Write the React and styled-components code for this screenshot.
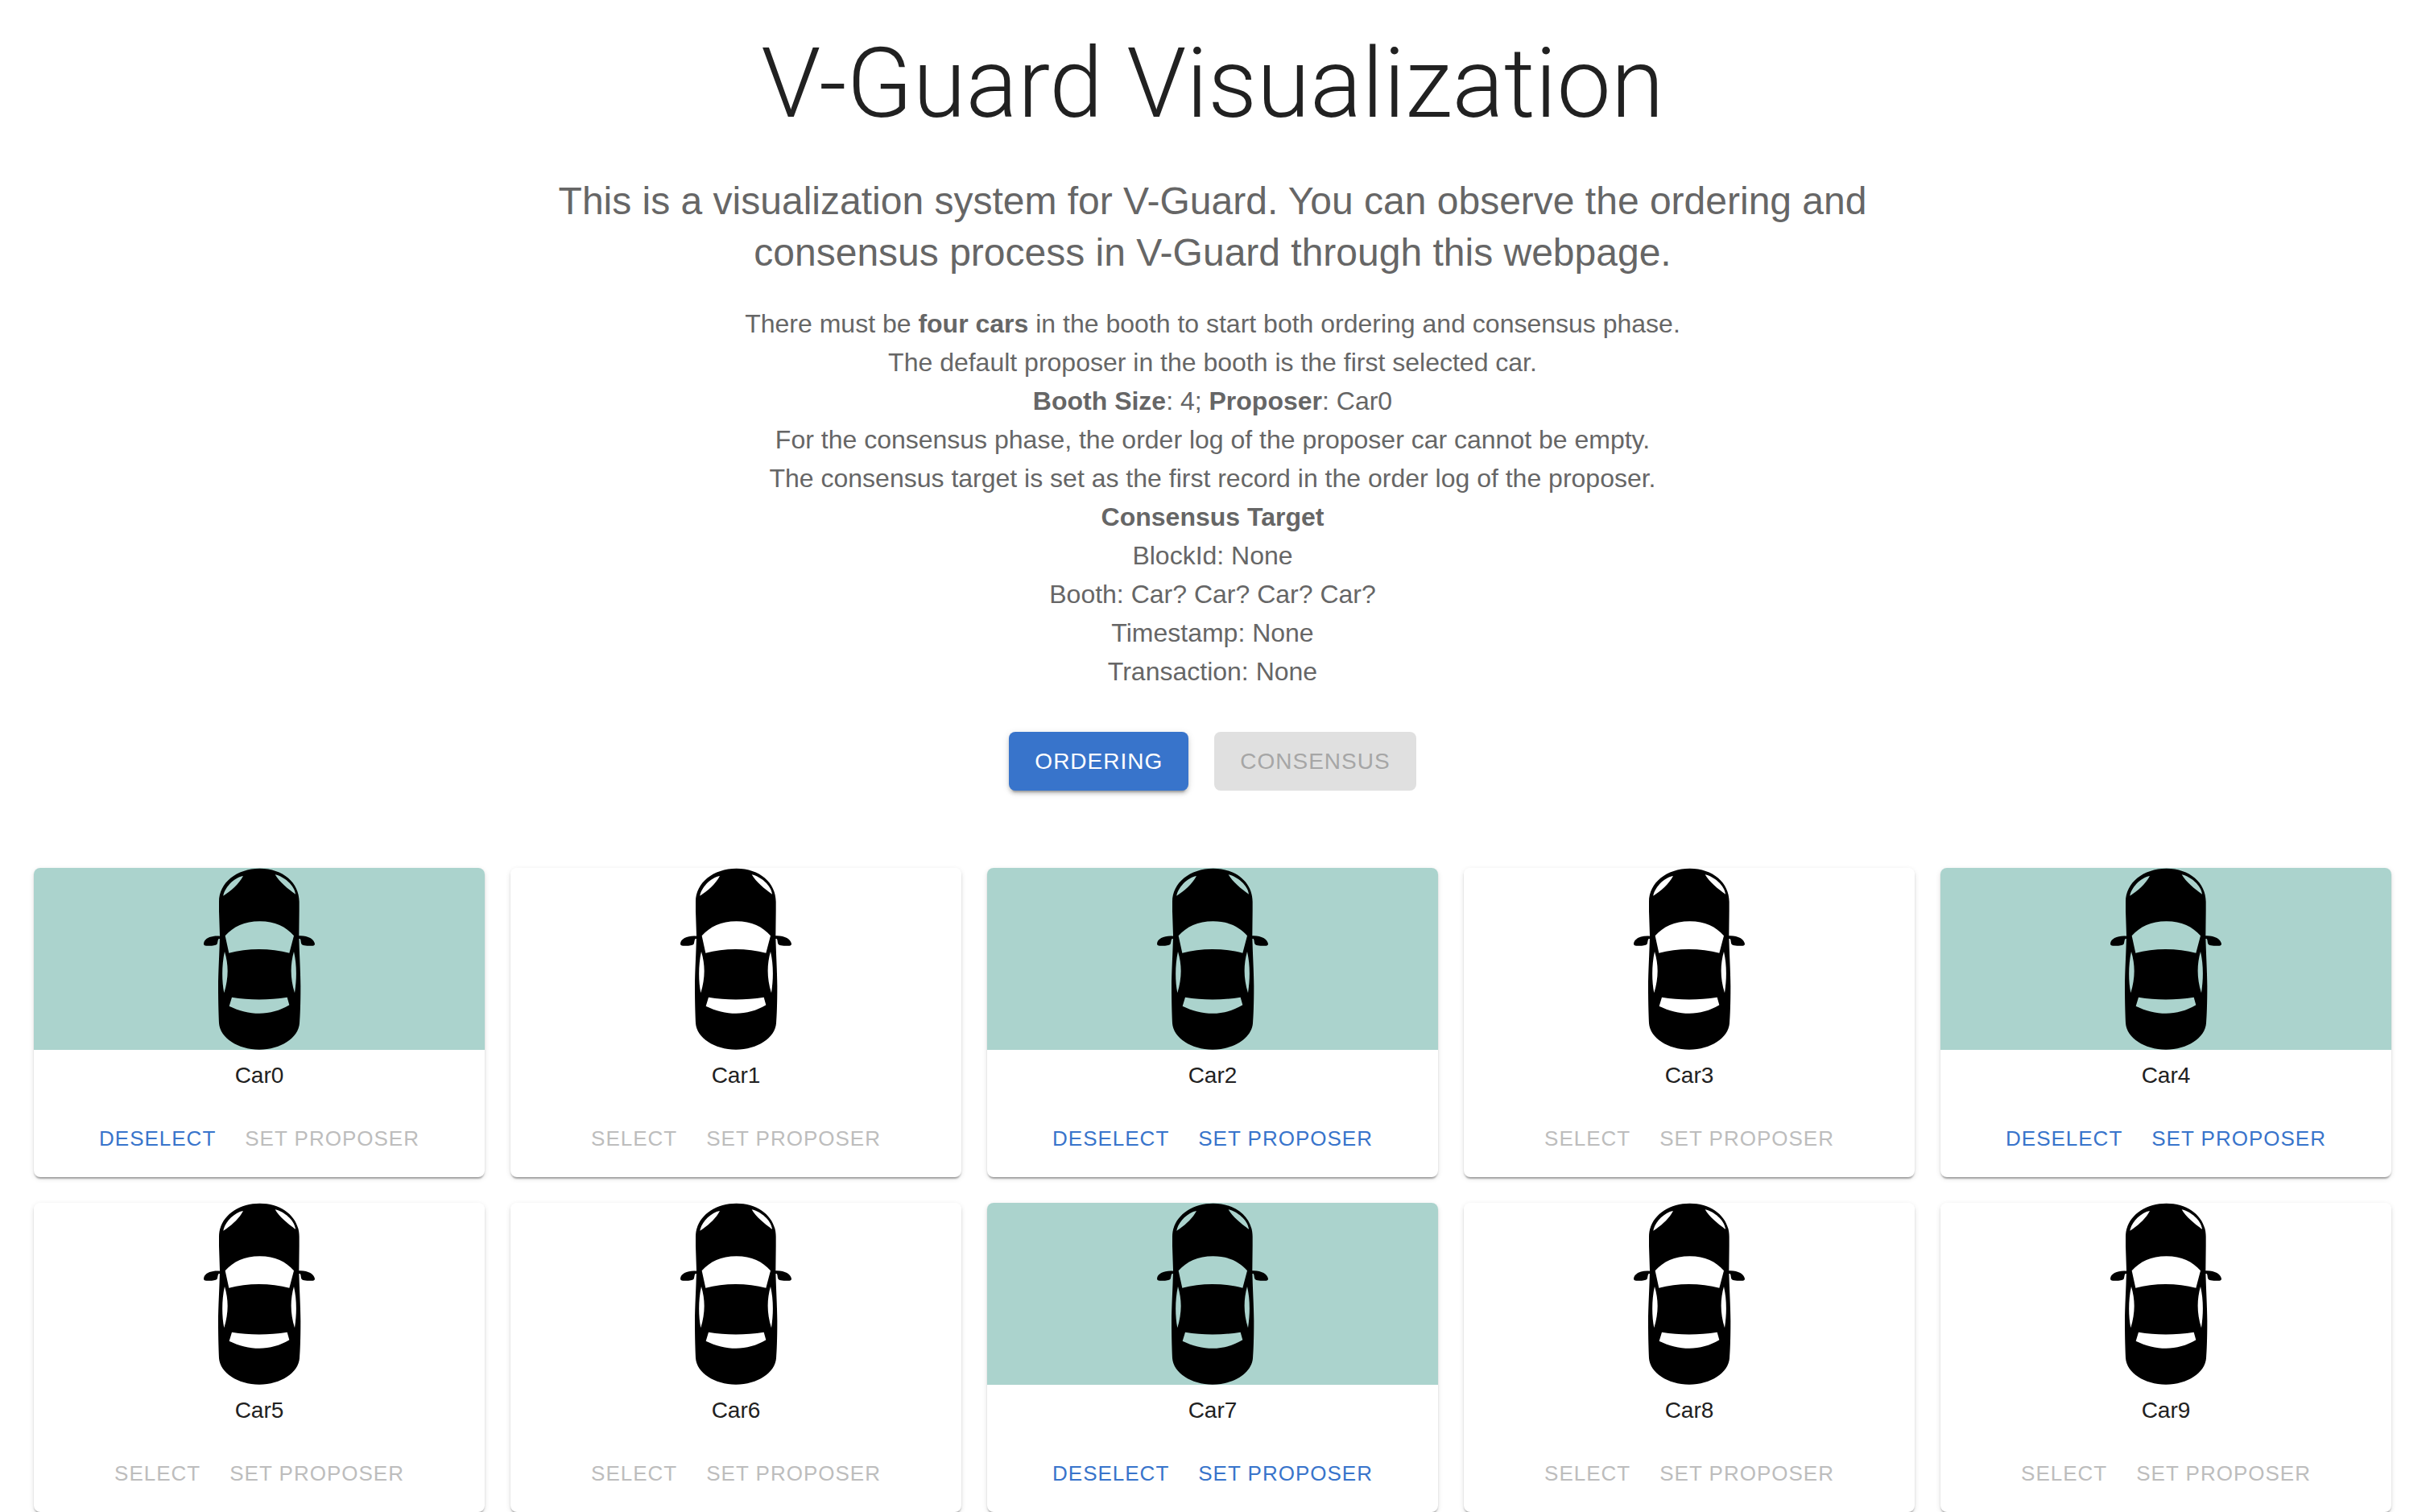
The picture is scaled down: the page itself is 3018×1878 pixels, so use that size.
import React, { useState } from "react";
import styled, { createGlobalStyle } from "styled-components";

const GlobalStyle = createGlobalStyle`
  * {
    box-sizing: border-box;
  }
  body {
    margin: 0;
    background: #fff;
    color: #212121;
    font-family: "Liberation Sans", Arial, Helvetica, sans-serif;
  }
`;

const Page = styled.main`
  padding: 32px 48px 0 42px;
`;

const Header = styled.header`
  display: flex;
  flex-direction: column;
  align-items: center;
  max-width: 1704px;
  margin: 0 auto;
  text-align: center;
`;

const Title = styled.h1`
  margin: 0 0 42px;
  font-family: Roboto, sans-serif;
  font-size: 120px;
  font-weight: 300;
  line-height: 144px;
`;

const Subtitle = styled.p`
  margin: 0 0 32px;
  color: #666;
  font-size: 48px;
  line-height: 64px;
`;

const Notes = styled.div`
  color: #666;
  font-size: 32px;
  line-height: 48px;
`;

const Note = styled.p`
  margin: 0;
`;

const Phases = styled.div`
  display: flex;
  justify-content: center;
  gap: 32px;
  margin: 51px 0 96px;
`;

const BaseButton = styled.button`
  border: 0;
  border-radius: 8px;
  font-family: inherit;
  letter-spacing: 1px;
  text-transform: uppercase;
  cursor: pointer;

  &:disabled {
    cursor: default;
  }
`;

const PhaseButton = styled(BaseButton)`
  padding: 12px 32px;
  background: #3874cb;
  color: #fff;
  font-size: 28px;
  line-height: 49px;
  box-shadow: 0 6px 2px -4px rgba(0, 0, 0, 0.2),
    0 4px 4px rgba(0, 0, 0, 0.14), 0 2px 10px rgba(0, 0, 0, 0.12);

  &:disabled {
    background: #e0e0e0;
    color: #a6a6a6;
    box-shadow: none;
  }
`;

const CardButton = styled(BaseButton)`
  padding: 8px 10px;
  background: transparent;
  color: #3874cb;
  font-size: 26px;
  line-height: 44px;

  &:disabled {
    color: #bdbdbd;
  }
`;

const CarGrid = styled.section`
  display: grid;
  grid-template-columns: repeat(5, minmax(0, 1fr));
  gap: 32px;
`;

const Card = styled.article`
  overflow: hidden;
  border-radius: 8px;
  background: #fff;
  box-shadow: 0 4px 2px -2px rgba(0, 0, 0, 0.2),
    0 2px 2px rgba(0, 0, 0, 0.14), 0 2px 6px rgba(0, 0, 0, 0.12);
`;

const CardMedia = styled.div`
  display: flex;
  justify-content: center;
  background: ${(p) => (p.$selected ? "#abd3cd" : "#fff")};
`;

const CarDrawing = styled.svg`
  display: block;
  width: 140px;
  height: 226px;
`;

const CarName = styled.h2`
  margin: 0;
  padding: 12px;
  font-size: 28px;
  font-weight: 400;
  line-height: 40px;
  text-align: center;
`;

const CardActions = styled.div`
  display: flex;
  justify-content: center;
  gap: 16px;
  padding: 16px 16px 18px;
`;

const CAR_PATH = [
  // body
  "M278 41C192 41 126 94 126 165L126 200L129 290C128 350 123 430 123 480C123 550 125 590 126 618C130 672 196 716 276 716C356 716 422 672 426 618C428 590 430 550 430 480C430 430 425 350 424 290L425 200L425 165C425 94 364 41 278 41Z",
  // headlights
  "M142 143C146 115 180 75 216 69C200 100 170 125 142 143Z",
  "M335 64C370 72 408 105 411 137C385 120 350 90 335 64Z",
  // windscreen
  "M149 292C180 258 220 238 278 238C335 238 375 258 405 292L388 356C320 337 230 337 163 356Z",
  // side windows
  "M147 351C136 400 136 460 145 505C162 450 162 400 147 351Z",
  "M405 351C391 400 391 450 408 505C416 450 416 400 405 351Z",
  // rear window
  "M174 521C240 532 310 532 380 521L388 550C320 591 240 591 164 554Z",
].join("");

const MIRRORS_PATH =
  "M130 293C100 290 70 300 69 322Q69 329 79 329C99 330 113 328 118 324C122 318 121 304 126 303L130 303Z" +
  "M423 292C455 290 480 303 483 322Q483 329 475 329C455 329 439 329 434 323C430 318 432 304 427 303L423 303Z";

function CarPicture() {
  return (
    <CarDrawing viewBox="66 39 420 678" aria-hidden="true">
      <path d={CAR_PATH} fillRule="evenodd" />
      <path d={MIRRORS_PATH} />
    </CarDrawing>
  );
}

const BOOTH_SIZE = 4;
const CARS = Array.from({ length: 10 }, (_, index) => index);

export default function App() {
  const [booth, setBooth] = useState([0, 2, 4, 7]);
  const [proposer, setProposer] = useState(0);
  const full = booth.length === BOOTH_SIZE;

  const toggle = (car) => {
    const next = booth.includes(car)
      ? booth.filter((c) => c !== car)
      : [...booth, car];
    setBooth(next);
    if (!next.includes(proposer)) setProposer(next[0]);
  };

  return (
    <>
      <GlobalStyle />
      <Page>
        <Header>
          <Title>V-Guard Visualization</Title>
          <Subtitle>
            This is a visualization system for V-Guard. You can observe the
            ordering and consensus process in V-Guard through this webpage.
          </Subtitle>
          <Notes>
            <Note>
              There must be <b>four cars</b> in the booth to start both ordering
              and consensus phase.
            </Note>
            <Note>
              The default proposer in the booth is the first selected car.
            </Note>
            <Note>
              <b>Booth Size</b>: {booth.length}; <b>Proposer</b>: Car
              {proposer ?? "?"}
            </Note>
            <Note>
              For the consensus phase, the order log of the proposer car cannot
              be empty.
            </Note>
            <Note>
              The consensus target is set as the first record in the order log
              of the proposer.
            </Note>
            <Note>
              <b>Consensus Target</b>
            </Note>
            <Note>BlockId: None</Note>
            <Note>Booth: Car? Car? Car? Car?</Note>
            <Note>Timestamp: None</Note>
            <Note>Transaction: None</Note>
          </Notes>
          <Phases>
            <PhaseButton type="button" disabled={!full}>
              Ordering
            </PhaseButton>
            <PhaseButton type="button" disabled>
              Consensus
            </PhaseButton>
          </Phases>
        </Header>
        <CarGrid>
          {CARS.map((car) => {
            const selected = booth.includes(car);
            return (
              <Card key={car}>
                <CardMedia $selected={selected}>
                  <CarPicture />
                </CardMedia>
                <CarName>Car{car}</CarName>
                <CardActions>
                  <CardButton
                    type="button"
                    disabled={!selected && full}
                    onClick={() => toggle(car)}
                  >
                    {selected ? "Deselect" : "Select"}
                  </CardButton>
                  <CardButton
                    type="button"
                    disabled={!selected || car === proposer}
                    onClick={() => setProposer(car)}
                  >
                    Set proposer
                  </CardButton>
                </CardActions>
              </Card>
            );
          })}
        </CarGrid>
      </Page>
    </>
  );
}
